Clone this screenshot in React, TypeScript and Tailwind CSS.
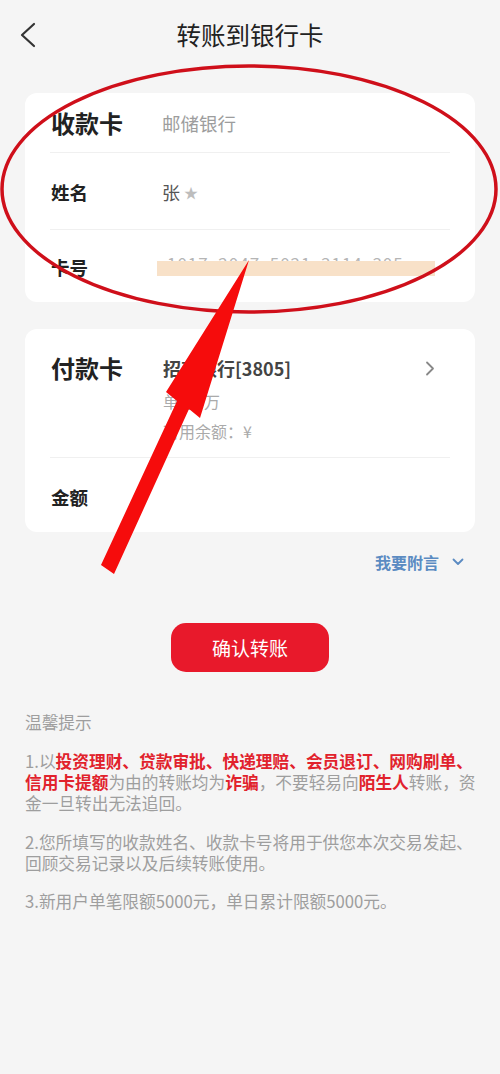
import React from "react";

const Divider = () => <div className="mx-[25px] h-px bg-[#f0f0f0]" />;

export default function App() {
  return (
    <div className="relative w-[500px] h-[1074px] overflow-hidden bg-[#f5f5f5] font-['Noto_Sans_CJK_SC','Noto_Sans',sans-serif]">
      {/* Header */}
      <div className="grid h-[70px] grid-cols-[60px_1fr_60px] items-center">
        <div className="pl-[20px]">
          <svg width="16" height="26" viewBox="0 0 16 26">
            <polyline points="14,2 2,13 14,24" fill="none" stroke="#333" strokeWidth="2.2" strokeLinecap="round" strokeLinejoin="round" />
          </svg>
        </div>
        <div className="text-center text-[24.5px] leading-[30px] text-[#222]">转账到银行卡</div>
        <div />
      </div>

      {/* Card 1 */}
      <div className="mx-[25px] mt-[23px] rounded-[12px] bg-white">
        <div className="flex h-[59px] items-center pl-[26px]">
          <div className="w-[111px] text-[24px] font-bold leading-[30px] text-[#222]">收款卡</div>
          <div className="text-[18.5px] leading-[24px] text-[#9d9d9d]">邮储银行</div>
        </div>
        <Divider />
        <div className="flex h-[76px] items-center pl-[26px] pt-[2px]">
          <div className="w-[111px] text-[18.5px] font-bold leading-[24px] text-[#222]">姓名</div>
          <div className="flex items-center text-[18px] leading-[24px] text-[#555]">
            <span>张</span>
            <span className="ml-[4px] text-[14px] text-[#bdbdbd]">★</span>
          </div>
        </div>
        <Divider />
        <div className="flex h-[72px] items-center pl-[26px] pt-[2px]">
          <div className="w-[111px] text-[18.5px] font-bold leading-[24px] text-[#222]">卡号</div>
          <div className="relative -ml-[5px] h-[24px] w-[278px] overflow-hidden">
            <div className="pl-[10px] text-[17px] leading-[16px] tracking-[1px] text-[#b5b5b5] whitespace-nowrap">
              1017&nbsp;&nbsp;2047&nbsp;&nbsp;5021&nbsp;&nbsp;3114&nbsp;&nbsp;305
            </div>
            <div className="absolute left-0 right-0 top-[6px] h-[15px] bg-[#f8e1c8]" />
          </div>
        </div>
      </div>

      {/* Card 2 */}
      <div className="mx-[25px] mt-[27px] rounded-[12px] bg-white">
        <div className="flex h-[128px] items-start pl-[26px] pt-[24px]">
          <div className="w-[112px] text-[24px] font-bold leading-[30px] text-[#222]">付款卡</div>
          <div className="flex-1">
            <div className="text-[18px] font-semibold leading-[30px] text-[#444]">招商银行[3805]</div>
            <div className="mt-[8px] text-[16px] leading-[20px] text-[#aaa]">单笔1万</div>
            <div className="mt-[10px] text-[16px] leading-[20px] text-[#aaa]">可用余额：¥</div>
          </div>
          <div className="mr-[40px] pt-[8px]">
            <svg width="10" height="15" viewBox="0 0 10 15">
              <polyline points="2,1.5 8,7.5 2,13.5" fill="none" stroke="#888" strokeWidth="1.8" strokeLinecap="round" strokeLinejoin="round" />
            </svg>
          </div>
        </div>
        <Divider />
        <div className="flex h-[74px] items-center pl-[26px] pt-[4px]">
          <div className="text-[18.5px] font-bold leading-[24px] text-[#222]">金额</div>
        </div>
      </div>

      {/* Attach message */}
      <div className="mt-[16px] flex h-[28px] items-center justify-end pr-[36px]">
        <span className="text-[16px] font-bold leading-[20px] text-[#5b8bc2]">我要附言</span>
        <svg className="ml-[13px]" width="12" height="8" viewBox="0 0 12 8">
          <polyline points="1.5,1.5 6,6 10.5,1.5" fill="none" stroke="#5b8bc2" strokeWidth="1.8" strokeLinecap="round" strokeLinejoin="round" />
        </svg>
      </div>

      {/* Button */}
      <div className="mt-[47px] flex justify-center">
        <div className="flex h-[49px] w-[158px] items-center justify-center rounded-[15px] bg-[#e8192b] text-[19px] leading-[24px] text-white">
          确认转账
        </div>
      </div>

      {/* Tips */}
      <div className="mt-[40px] px-[25px] text-[16.7px] leading-[21px] text-[#9e9e9e]">
        <div>温馨提示</div>
        <div className="mt-[18px]">
          <div className="whitespace-nowrap">
            1.以<b className="text-[#e1222c]">投资理财、贷款审批、快递理赔、会员退订、网购刷单、</b>
          </div>
          <div className="whitespace-nowrap">
            <b className="text-[#e1222c]">信用卡提额</b>为由的转账均为<b className="text-[#e1222c]">诈骗</b>，不要轻易向<b className="text-[#e1222c]">陌生人</b>转账，资
          </div>
          <div className="whitespace-nowrap">金一旦转出无法追回。</div>
        </div>
        <div className="mt-[18px]">
          <div className="whitespace-nowrap">2.您所填写的收款姓名、收款卡号将用于供您本次交易发起、</div>
          <div className="whitespace-nowrap">回顾交易记录以及后续转账使用。</div>
        </div>
        <div className="mt-[17px] whitespace-nowrap">3.新用户单笔限额5000元，单日累计限额5000元。</div>
      </div>

      {/* Annotation overlay */}
      <svg className="pointer-events-none absolute left-0 top-0" width="500" height="1074" viewBox="0 0 500 1074">
        <ellipse cx="249" cy="189" rx="247" ry="123" fill="none" stroke="#cf0f1a" strokeWidth="3.5" />
        <polygon
          points="249,260 200,418 189,409 114,574 101,565 177,401 166,392"
          fill="#f60c0c"
        />
      </svg>
    </div>
  );
}
